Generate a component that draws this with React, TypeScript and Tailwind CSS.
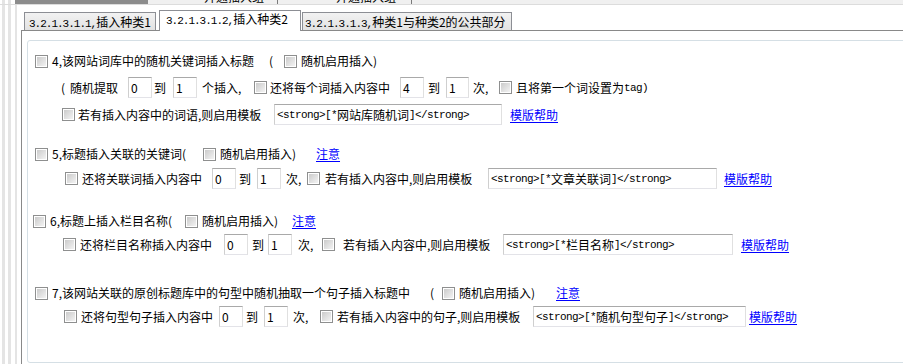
import React from "react";
import clsx from "clsx";

type Kids = { children?: React.ReactNode };

function Slot({ w, children }: { w?: string } & Kids) {
  return (
    <div className={clsx("flex shrink-0 items-center whitespace-nowrap", w)}>
      {children}
    </div>
  );
}

function Mono({ children, tight }: { tight?: boolean } & Kids) {
  return (
    <span
      className={clsx(
        "font-['Liberation_Mono',monospace] text-[11px]",
        tight ? "tracking-[-1px]" : "tracking-[-0.6px]"
      )}
    >
      {children}
    </span>
  );
}

function Check() {
  return (
    <span className="block h-[13px] w-[13px] border border-[#8e8f8f] bg-white p-px">
      <span className="block h-full w-full bg-linear-to-br from-[#cbcbcb] to-[#f3f3f3]" />
    </span>
  );
}

function Field({ w, children }: { w: string } & Kids) {
  return (
    <div
      className={clsx(
        "flex h-[21px] shrink-0 items-center overflow-hidden whitespace-nowrap border border-t-[#a9a9a9] border-l-[#cfcfcf] border-r-[#e0e0e0] border-b-[#e3e3e8] bg-white pl-[2px]",
        w
      )}
    >
      {children}
    </div>
  );
}

function Help({ children }: Kids) {
  return <span className="whitespace-nowrap text-[#0000ff] underline underline-offset-2">{children}</span>;
}

function Tpl({ word }: { word: string }) {
  return (
    <>
      <Mono>&lt;strong&gt;[*</Mono>
      {word}
      <Mono>]&lt;/strong&gt;</Mono>
    </>
  );
}

function Stripes({ wide }: { wide?: boolean }) {
  return (
    <div className={clsx("flex shrink-0 bg-white", wide ? "w-[21px]" : "w-[15px]")}>
      <div className="ml-[2px] w-[3px] bg-[#e4e4e4]" />
      <div className="ml-[3px] w-[3px] bg-[#e4e4e4]" />
      {wide && <div className="ml-[4px] w-[2px] bg-[#e4e4e4]" />}
    </div>
  );
}

export default function App() {
  return (
    <div className="flex h-[364px] w-[903px] flex-col overflow-hidden bg-white font-['Noto_Sans_CJK_SC',sans-serif] text-[12px] leading-[16px] text-black">
      {/* outer tab strip, mostly cut off */}
      <div className="flex h-[4px] shrink-0 bg-[#f0f0f0]">
        <Stripes />
        <div className="w-[133px] bg-[#8c8c8c]" />
        <div className="w-[130px] overflow-hidden border-r border-[#7a7a7a] pl-[56px]">
          <div className="-mt-[11px] whitespace-nowrap">开通插入组</div>
        </div>
        <div className="w-[134px] overflow-hidden border-r border-[#7a7a7a] pl-[58px]">
          <div className="-mt-[11px] whitespace-nowrap">开通插入组</div>
        </div>
      </div>
      <div className="h-px shrink-0 bg-[#dcdcdc]" />

      <div className="flex min-h-0 flex-1">
        <Stripes wide />

        <div className="flex min-w-0 flex-1 flex-col">
          {/* tabs */}
          <div className="flex h-[25px] shrink-0 items-end pl-[3px]">
            <div className="h-[18px] w-[132px] overflow-hidden border border-b-0 border-[#8c8e94] bg-linear-to-b from-[#f2f2f2] to-[#e2e2e2] pl-[4px] pt-px whitespace-nowrap">
              <Mono tight>3.2.1.3.1.1,</Mono>插入种类1
            </div>
            <div className="relative z-10 -mb-px ml-[3px] h-[21px] w-[142px] overflow-hidden border border-b-0 border-[#8c8e94] bg-white pl-[6px] whitespace-nowrap">
              <Mono tight>3.2.1.3.1.2,</Mono>插入种类2
            </div>
            <div className="ml-px h-[18px] w-[210px] overflow-hidden border border-b-0 border-[#8c8e94] bg-linear-to-b from-[#f2f2f2] to-[#e2e2e2] pl-[2px] pt-px whitespace-nowrap">
              <Mono tight>3.2.1.3.1.3,</Mono>种类1与种类2的公共部分
            </div>
          </div>

          {/* tab page */}
          <div className="min-h-0 flex-1 border-l border-t border-[#898989]">
            <div className="ml-[5px] mt-[9px] h-[323px] w-[900px] rounded-[3px] border border-[#d5dfe5]">
              {/* 4 */}
              <div className="mt-[12px] flex h-[16px] items-center pl-[7px]">
                <Slot w="w-[17px]"><Check /></Slot>
                <Slot w="w-[217px]">4,该网站词库中的随机关键词插入标题</Slot>
                <Slot w="w-[15px]">(</Slot>
                <Slot w="w-[17px]"><Check /></Slot>
                <Slot>随机启用插入)</Slot>
              </div>
              <div className="mt-[8px] flex h-[21px] items-center pl-[33px]">
                <Slot w="w-[9px]">(</Slot>
                <Slot w="w-[58px]">随机提取</Slot>
                <Slot w="w-[26px]"><Field w="w-[24px]">0</Field></Slot>
                <Slot w="w-[19px]">到</Slot>
                <Slot w="w-[29px]"><Field w="w-[24px]">1</Field></Slot>
                <Slot w="w-[52px]">个插入,</Slot>
                <Slot w="w-[16px]"><Check /></Slot>
                <Slot w="w-[130px]">还将每个词插入内容中</Slot>
                <Slot w="w-[28px]"><Field w="w-[24px]">4</Field></Slot>
                <Slot w="w-[18px]">到</Slot>
                <Slot w="w-[27px]"><Field w="w-[23px]">1</Field></Slot>
                <Slot w="w-[26px]">次,</Slot>
                <Slot w="w-[17px]"><Check /></Slot>
                <Slot>且将第一个词设置为<Mono>tag)</Mono></Slot>
              </div>
              <div className="mt-[6px] flex h-[21px] items-center pl-[34px]">
                <Slot w="w-[16px]"><Check /></Slot>
                <Slot w="w-[196px]">若有插入内容中的词语,则启用模板</Slot>
                <Slot w="w-[236px]"><Field w="w-[228px]"><Tpl word="网站库随机词" /></Field></Slot>
                <Help>模版帮助</Help>
              </div>

              {/* 5 */}
              <div className="mt-[21px] flex h-[16px] items-center pl-[7px]">
                <Slot w="w-[17px]"><Check /></Slot>
                <Slot w="w-[151px]">5,标题插入关联的关键词(</Slot>
                <Slot w="w-[17px]"><Check /></Slot>
                <Slot w="w-[96px]">随机启用插入)</Slot>
                <Help>注意</Help>
              </div>
              <div className="mt-[6px] flex h-[21px] items-center pl-[37px]">
                <Slot w="w-[17px]"><Check /></Slot>
                <Slot w="w-[130px]">还将关联词插入内容中</Slot>
                <Slot w="w-[27px]"><Field w="w-[24px]">0</Field></Slot>
                <Slot w="w-[18px]">到</Slot>
                <Slot w="w-[29px]"><Field w="w-[24px]">1</Field></Slot>
                <Slot w="w-[21px]">次,</Slot>
                <Slot w="w-[18px]"><Check /></Slot>
                <Slot w="w-[163px]">若有插入内容中,则启用模板</Slot>
                <Slot w="w-[236px]"><Field w="w-[229px]"><Tpl word="文章关联词" /></Field></Slot>
                <Help>模版帮助</Help>
              </div>

              {/* 6 */}
              <div className="mt-[24px] flex h-[16px] items-center pl-[5px]">
                <Slot w="w-[17px]"><Check /></Slot>
                <Slot w="w-[135px]">6,标题上插入栏目名称(</Slot>
                <Slot w="w-[17px]"><Check /></Slot>
                <Slot w="w-[90px]">随机启用插入)</Slot>
                <Help>注意</Help>
              </div>
              <div className="mt-[5px] flex h-[21px] items-center pl-[35px]">
                <Slot w="w-[17px]"><Check /></Slot>
                <Slot w="w-[144px]">还将栏目名称插入内容中</Slot>
                <Slot w="w-[28px]"><Field w="w-[24px]">0</Field></Slot>
                <Slot w="w-[16px]">到</Slot>
                <Slot w="w-[30px]"><Field w="w-[24px]">1</Field></Slot>
                <Slot w="w-[24px]">次,</Slot>
                <Slot w="w-[21px]"><Check /></Slot>
                <Slot w="w-[160px]">若有插入内容中,则启用模板</Slot>
                <Slot w="w-[238px]"><Field w="w-[230px]"><Tpl word="栏目名称" /></Field></Slot>
                <Help>模版帮助</Help>
              </div>

              {/* 7 */}
              <div className="mt-[30px] flex h-[16px] items-center pl-[7px]">
                <Slot w="w-[17px]"><Check /></Slot>
                <Slot w="w-[378px]">7,该网站关联的原创标题库中的句型中随机抽取一个句子插入标题中</Slot>
                <Slot w="w-[12px]">(</Slot>
                <Slot w="w-[17px]"><Check /></Slot>
                <Slot w="w-[97px]">随机启用插入)</Slot>
                <Help>注意</Help>
              </div>
              <div className="mt-[5px] flex h-[21px] items-center pl-[36px]">
                <Slot w="w-[17px]"><Check /></Slot>
                <Slot w="w-[138px]">还将句型句子插入内容中</Slot>
                <Slot w="w-[27px]"><Field w="w-[24px]">0</Field></Slot>
                <Slot w="w-[18px]">到</Slot>
                <Slot w="w-[29px]"><Field w="w-[24px]">1</Field></Slot>
                <Slot w="w-[27px]">次,</Slot>
                <Slot w="w-[17px]"><Check /></Slot>
                <Slot w="w-[196px]">若有插入内容中的句子,则启用模板</Slot>
                <Slot w="w-[216px]"><Field w="w-[213px]"><Tpl word="随机句型句子" /></Field></Slot>
                <Help>模版帮助</Help>
              </div>
            </div>
          </div>
        </div>
      </div>
    </div>
  );
}
